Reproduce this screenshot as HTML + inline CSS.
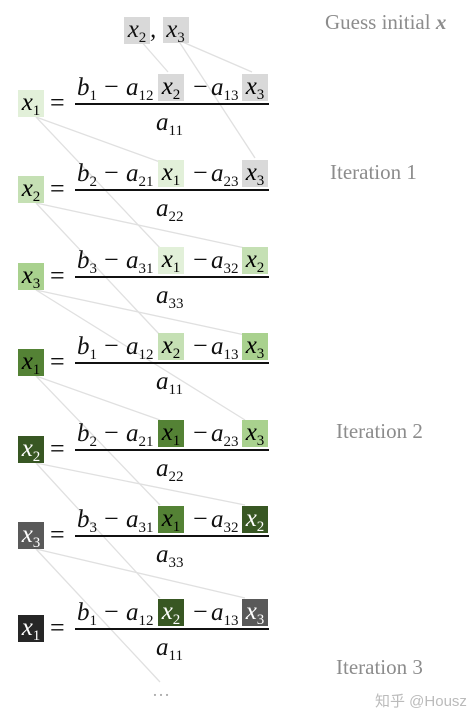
<!DOCTYPE html>
<html><head><meta charset="utf-8"><style>
body{margin:0;width:474px;height:720px;background:#fff;position:relative;overflow:hidden;font-family:"Liberation Serif",serif}
.r{position:absolute;left:0;width:300px;height:90px}
.t{position:absolute;font-style:italic;font-size:25px;line-height:26px;color:#111;white-space:nowrap}
.t sub{font-style:normal;font-size:15px;vertical-align:-5px;line-height:0}
.b{position:absolute;width:26px;height:27px;text-align:center}
.b span{font-style:italic;font-size:25px;line-height:26px}
.b sub{font-style:normal;font-size:15px;vertical-align:-5px;line-height:0}
.m{position:absolute;font-size:26px;line-height:26px;color:#111}
.ln{position:absolute;left:75px;top:45px;width:194px;height:2px;background:#111}
.w{color:#fff}
.lab{position:absolute;color:#8c8c8c;font-size:21px}
svg{position:absolute;left:0;top:0}
</style></head><body>
<svg width="474" height="720"><g stroke="#e0e0e0" stroke-width="1.3" fill="none">
<line x1="140" y1="40" x2="168" y2="72"/><line x1="178" y1="40" x2="252" y2="72"/><line x1="178" y1="40" x2="255" y2="158"/>
<line x1="36" y1="117" x2="160" y2="162"/><line x1="36" y1="117" x2="160" y2="248"/>
<line x1="36" y1="203" x2="245" y2="248"/><line x1="36" y1="203" x2="160" y2="335"/>
<line x1="36" y1="290" x2="245" y2="335"/><line x1="36" y1="290" x2="245" y2="420"/>
<line x1="36" y1="376" x2="160" y2="420"/><line x1="36" y1="376" x2="160" y2="505"/>
<line x1="36" y1="463" x2="245" y2="505"/><line x1="36" y1="463" x2="160" y2="598"/>
<line x1="36" y1="549" x2="245" y2="598"/><line x1="36" y1="549" x2="160" y2="682"/>
</g></svg>

<div class="t" style="left:124px;top:17px"><span class="b" style="position:relative;display:inline-block;background:#d9d9d9;left:0;top:0"><span>x</span><sub>2</sub></span>, <span style="display:inline-block;background:#d9d9d9;width:26px;text-align:center">x<sub>3</sub></span></div>
<div class="lab" style="left:325px;top:10px">Guess initial <b><i>x</i></b></div>
<div class="lab" style="left:330px;top:160px">Iteration 1</div>
<div class="lab" style="left:336px;top:419px">Iteration 2</div>
<div class="lab" style="left:336px;top:655px">Iteration 3</div>
<div style="position:absolute;left:375px;top:690px;color:#bbb;font-size:15px;font-family:'Liberation Sans','Noto Sans CJK SC',sans-serif">知乎 @Housz</div>
<div style="position:absolute;left:152px;top:680px;color:#aaa;font-size:18px">…</div>

<div class="r" style="top:58px">
<div class="b" style="left:18px;top:32px;background:#e2f0d9"><span>x</span><sub>1</sub></div><div class="m" style="left:50px;top:32px">=</div>
<div class="t" style="left:77px;top:17px">b<sub>1</sub></div><div class="m" style="left:104px;top:16px">−</div><div class="t" style="left:126px;top:17px">a<sub>12</sub></div>
<div class="b" style="left:158px;top:16px;background:#d9d9d9"><span>x</span><sub>2</sub></div><div class="m" style="left:193px;top:16px">−</div><div class="t" style="left:211px;top:17px">a<sub>13</sub></div>
<div class="b" style="left:242px;top:16px;background:#d9d9d9"><span>x</span><sub>3</sub></div>
<div class="ln"></div><div class="t" style="left:156px;top:52px">a<sub>11</sub></div></div>

<div class="r" style="top:144px">
<div class="b" style="left:18px;top:32px;background:#c5e0b4"><span>x</span><sub>2</sub></div><div class="m" style="left:50px;top:32px">=</div>
<div class="t" style="left:77px;top:17px">b<sub>2</sub></div><div class="m" style="left:104px;top:16px">−</div><div class="t" style="left:126px;top:17px">a<sub>21</sub></div>
<div class="b" style="left:158px;top:16px;background:#e2f0d9"><span>x</span><sub>1</sub></div><div class="m" style="left:193px;top:16px">−</div><div class="t" style="left:211px;top:17px">a<sub>23</sub></div>
<div class="b" style="left:242px;top:16px;background:#d9d9d9"><span>x</span><sub>3</sub></div>
<div class="ln"></div><div class="t" style="left:156px;top:52px">a<sub>22</sub></div></div>

<div class="r" style="top:231px">
<div class="b" style="left:18px;top:32px;background:#a9d18e"><span>x</span><sub>3</sub></div><div class="m" style="left:50px;top:32px">=</div>
<div class="t" style="left:77px;top:17px">b<sub>3</sub></div><div class="m" style="left:104px;top:16px">−</div><div class="t" style="left:126px;top:17px">a<sub>31</sub></div>
<div class="b" style="left:158px;top:16px;background:#e2f0d9"><span>x</span><sub>1</sub></div><div class="m" style="left:193px;top:16px">−</div><div class="t" style="left:211px;top:17px">a<sub>32</sub></div>
<div class="b" style="left:242px;top:16px;background:#c5e0b4"><span>x</span><sub>2</sub></div>
<div class="ln"></div><div class="t" style="left:156px;top:52px">a<sub>33</sub></div></div>

<div class="r" style="top:317px">
<div class="b" style="left:18px;top:32px;background:#548235"><span>x</span><sub>1</sub></div><div class="m" style="left:50px;top:32px">=</div>
<div class="t" style="left:77px;top:17px">b<sub>1</sub></div><div class="m" style="left:104px;top:16px">−</div><div class="t" style="left:126px;top:17px">a<sub>12</sub></div>
<div class="b" style="left:158px;top:16px;background:#c5e0b4"><span>x</span><sub>2</sub></div><div class="m" style="left:193px;top:16px">−</div><div class="t" style="left:211px;top:17px">a<sub>13</sub></div>
<div class="b" style="left:242px;top:16px;background:#a9d18e"><span>x</span><sub>3</sub></div>
<div class="ln"></div><div class="t" style="left:156px;top:52px">a<sub>11</sub></div></div>

<div class="r" style="top:404px">
<div class="b w" style="left:18px;top:32px;background:#385723"><span>x</span><sub>2</sub></div><div class="m" style="left:50px;top:32px">=</div>
<div class="t" style="left:77px;top:17px">b<sub>2</sub></div><div class="m" style="left:104px;top:16px">−</div><div class="t" style="left:126px;top:17px">a<sub>21</sub></div>
<div class="b" style="left:158px;top:16px;background:#548235"><span>x</span><sub>1</sub></div><div class="m" style="left:193px;top:16px">−</div><div class="t" style="left:211px;top:17px">a<sub>23</sub></div>
<div class="b" style="left:242px;top:16px;background:#a9d18e"><span>x</span><sub>3</sub></div>
<div class="ln"></div><div class="t" style="left:156px;top:52px">a<sub>22</sub></div></div>

<div class="r" style="top:490px">
<div class="b w" style="left:18px;top:32px;background:#595959"><span>x</span><sub>3</sub></div><div class="m" style="left:50px;top:32px">=</div>
<div class="t" style="left:77px;top:17px">b<sub>3</sub></div><div class="m" style="left:104px;top:16px">−</div><div class="t" style="left:126px;top:17px">a<sub>31</sub></div>
<div class="b" style="left:158px;top:16px;background:#548235"><span>x</span><sub>1</sub></div><div class="m" style="left:193px;top:16px">−</div><div class="t" style="left:211px;top:17px">a<sub>32</sub></div>
<div class="b w" style="left:242px;top:16px;background:#385723"><span>x</span><sub>2</sub></div>
<div class="ln"></div><div class="t" style="left:156px;top:52px">a<sub>33</sub></div></div>

<div class="r" style="top:583px">
<div class="b w" style="left:18px;top:32px;background:#262626"><span>x</span><sub>1</sub></div><div class="m" style="left:50px;top:32px">=</div>
<div class="t" style="left:77px;top:17px">b<sub>1</sub></div><div class="m" style="left:104px;top:16px">−</div><div class="t" style="left:126px;top:17px">a<sub>12</sub></div>
<div class="b w" style="left:158px;top:16px;background:#385723"><span>x</span><sub>2</sub></div><div class="m" style="left:193px;top:16px">−</div><div class="t" style="left:211px;top:17px">a<sub>13</sub></div>
<div class="b w" style="left:242px;top:16px;background:#595959"><span>x</span><sub>3</sub></div>
<div class="ln"></div><div class="t" style="left:156px;top:52px">a<sub>11</sub></div></div>
</body></html>
